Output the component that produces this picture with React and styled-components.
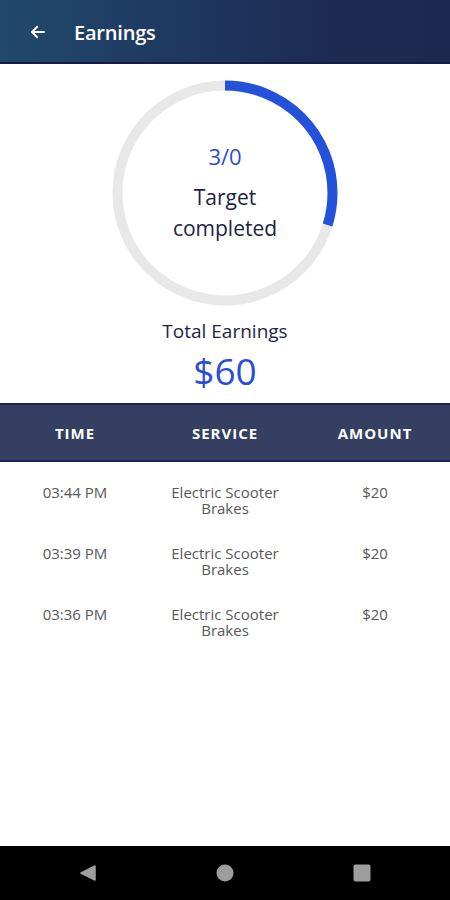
import React from "react";
import styled, { createGlobalStyle } from "styled-components";

const Global = createGlobalStyle`
  html, body { margin: 0; padding: 0; background: #ffffff; }
  body { font-family: "Open Sans", "Noto Sans", sans-serif; }
  * { box-sizing: border-box; }
`;

const Screen = styled.div`
  width: 450px;
  height: 900px;
  display: flex;
  flex-direction: column;
  background: #fff;
  overflow: hidden;
`;

const AppBar = styled.header`
  height: 64px;
  flex: none;
  display: flex;
  align-items: center;
  gap: 26px;
  padding: 2px 0 0 28px;
  background: linear-gradient(90deg, #21496c 0%, #1f3a62 35%, #1d2c54 70%, #1c2850 100%);
  border-bottom: 2px solid #141d46;
  color: #fff;
`;

const BackButton = styled.span`
  display: flex;
  width: 20px;
  height: 20px;
  align-items: center;
  justify-content: center;
`;

const Title = styled.h1`
  margin: 0;
  font-size: 20px;
  font-weight: 600;
  letter-spacing: -0.2px;
`;

const Summary = styled.section`
  display: flex;
  flex-direction: column;
  align-items: center;
  padding-top: 16px;
`;

const RingWrap = styled.div`
  position: relative;
  width: 226px;
  height: 226px;
`;

const RingCenter = styled.div`
  position: absolute;
  inset: 0;
  display: flex;
  flex-direction: column;
  align-items: center;
  justify-content: center;
  padding-bottom: 1px;
`;

const Ratio = styled.div`
  font-size: 22px;
  color: #2c4fd0;
  margin-bottom: 12px;
  line-height: 28px;
`;

const RingLabel = styled.div`
  font-size: 21px;
  line-height: 31px;
  color: #1d2345;
  text-align: center;
`;

const TotalLabel = styled.div`
  margin-top: 12px;
  font-size: 19px;
  line-height: 26px;
  color: #1d2345;
`;

const TotalValue = styled.div`
  font-size: 37px;
  line-height: 50px;
  color: #2a4fd6;
  margin-top: 2px;
`;

const Table = styled.div`
  margin-top: 7px;
  display: flex;
  flex-direction: column;
`;

const HeadRow = styled.div`
  display: grid;
  grid-template-columns: repeat(3, 1fr);
  align-items: center;
  height: 59px;
  background: #343f62;
  border-top: 2px solid #1b2452;
  border-bottom: 2px solid #1b2452;
`;

const HeadCell = styled.div`
  text-align: center;
  color: #ffffff;
  font-weight: 700;
  font-size: 15px;
  letter-spacing: 1px;
`;

const Rows = styled.div`
  display: flex;
  flex-direction: column;
  padding-top: 22px;
`;

const Row = styled.div`
  display: grid;
  grid-template-columns: repeat(3, 1fr);
  align-items: start;
  height: 61px;
`;

const Cell = styled.div`
  display: flex;
  flex-direction: column;
  align-items: center;
  text-align: center;
  color: #585858;
  font-size: 15px;
  white-space: nowrap;
`;

const Line = styled.span`
  display: block;
  line-height: 17px;
  height: 16px;
`;

const Spacer = styled.div`
  flex: 1;
`;

const NavBar = styled.nav`
  height: 54px;
  flex: none;
  background: #000;
  display: grid;
  grid-template-columns: repeat(3, 1fr);
  align-items: center;
  justify-items: center;
  padding: 0 20px;
`;

const rows = [
  { time: "03:44 PM", service: ["Electric Scooter", "Brakes"], amount: "$20" },
  { time: "03:39 PM", service: ["Electric Scooter", "Brakes"], amount: "$20" },
  { time: "03:36 PM", service: ["Electric Scooter", "Brakes"], amount: "$20" },
];

function Ring({ progress }) {
  const r = 107.5;
  const c = 2 * Math.PI * r;
  return (
    <svg width="226" height="226" viewBox="0 0 226 226">
      <circle cx="113" cy="113" r={r} fill="none" stroke="#e8e8e8" strokeWidth="10" />
      <circle
        cx="113"
        cy="113"
        r={r}
        fill="none"
        stroke="#2451d9"
        strokeWidth="10"
        strokeDasharray={`${c * progress} ${c}`}
        transform="rotate(-90 113 113)"
      />
    </svg>
  );
}

export default function App() {
  return (
    <Screen>
      <Global />
      <AppBar>
        <BackButton>
          <svg width="18" height="18" viewBox="0 0 24 24" fill="none" stroke="#fff" strokeWidth="2.6" strokeLinecap="round" strokeLinejoin="round">
            <path d="M20 12H5" />
            <path d="M11 5l-7 7 7 7" />
          </svg>
        </BackButton>
        <Title>Earnings</Title>
      </AppBar>

      <Summary>
        <RingWrap>
          <Ring progress={0.298} />
          <RingCenter>
            <Ratio>3/0</Ratio>
            <RingLabel>
              Target
              <br />
              completed
            </RingLabel>
          </RingCenter>
        </RingWrap>
        <TotalLabel>Total Earnings</TotalLabel>
        <TotalValue>$60</TotalValue>
      </Summary>

      <Table>
        <HeadRow>
          <HeadCell>TIME</HeadCell>
          <HeadCell>SERVICE</HeadCell>
          <HeadCell>AMOUNT</HeadCell>
        </HeadRow>
        <Rows>
          {rows.map((r, i) => (
            <Row key={i}>
              <Cell>
                <Line>{r.time}</Line>
              </Cell>
              <Cell>
                <Line>{r.service[0]}</Line>
                <Line>{r.service[1]}</Line>
              </Cell>
              <Cell>
                <Line>{r.amount}</Line>
              </Cell>
            </Row>
          ))}
        </Rows>
      </Table>

      <Spacer />

      <NavBar>
        <svg width="18" height="18" viewBox="0 0 18 18">
          <path d="M16 2 L2 9 L16 16 Z" fill="#9e9e9e" stroke="#9e9e9e" strokeWidth="1.5" strokeLinejoin="round" />
        </svg>
        <svg width="18" height="18" viewBox="0 0 18 18">
          <circle cx="9" cy="9" r="8.5" fill="#9e9e9e" />
        </svg>
        <svg width="18" height="18" viewBox="0 0 18 18">
          <rect x="0.5" y="0.5" width="17" height="17" rx="2" fill="#9e9e9e" />
        </svg>
      </NavBar>
    </Screen>
  );
}
